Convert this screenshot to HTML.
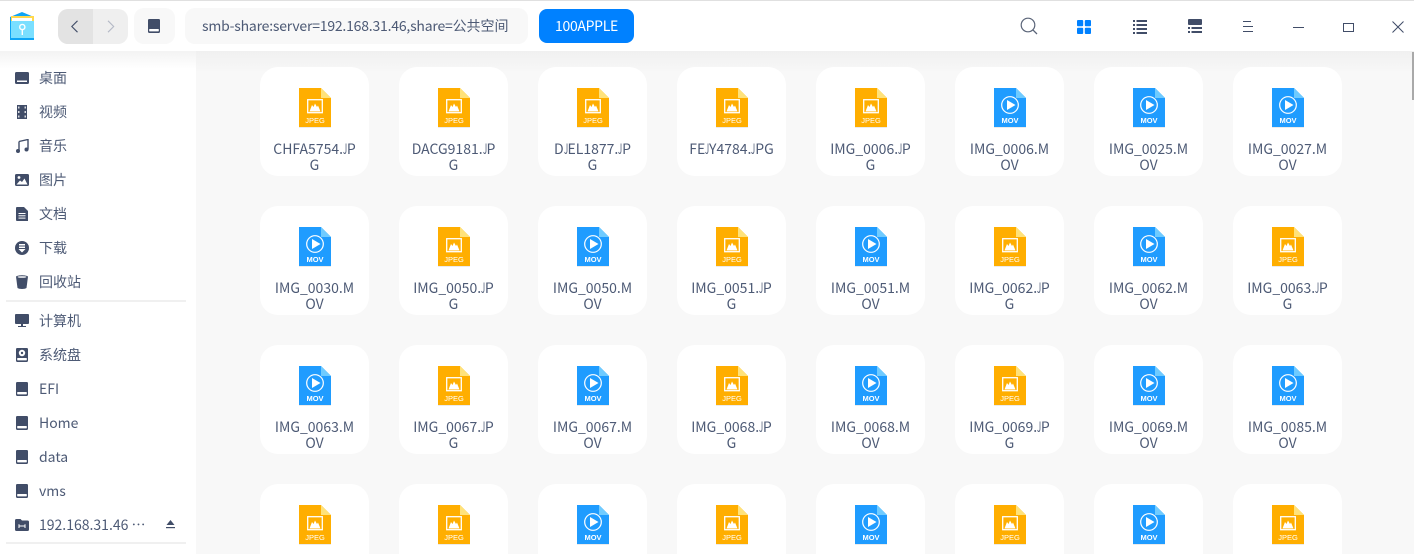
<!DOCTYPE html>
<html><head><meta charset="utf-8"><style>
html,body{margin:0;padding:0;width:1414px;height:554px;overflow:hidden;background:#f8f8f8;font-family:"Noto Sans CJK SC","Liberation Sans",sans-serif;color:#414d68}
#root{position:relative;width:1414px;height:554px;overflow:hidden;background:#f8f8f8}
#top{position:absolute;left:0;top:0;width:1414px;height:51px;background:#fff;border-top:1px solid #e0e0e0;box-sizing:border-box;z-index:3}
.a{position:absolute}
#shade{position:absolute;left:0;top:51px;width:1414px;height:22px;background:linear-gradient(#f0f0f0,#f8f8f8);}
#side{position:absolute;left:0;top:51px;width:196px;height:503px;background:linear-gradient(#f3f3f3,#fff 18px,#fff);font-size:14px}
.r{position:absolute;left:39px;line-height:20px;white-space:nowrap;color:#4d5a75}
.ic{position:absolute;left:15px;width:14px;height:14px;fill:#414d68}
.dv{position:absolute;left:6px;width:180px;height:2px;background:#f0f0f0}
#grid{position:absolute;left:260px;top:67px;display:grid;grid-template-columns:repeat(8,109px);column-gap:30px;row-gap:30px}
.c{position:relative;width:109px;height:109px;background:#fff;border-radius:18px;text-align:center;font-size:14px;line-height:16px;color:#4d5a75}
.c.l{height:70px;border-radius:18px 18px 0 0}
.c svg{position:absolute;left:39px;top:21px;width:32px;height:40px;overflow:visible}
.c p{position:absolute;left:0;top:74px;width:109px;margin:0}
.c b{font-weight:400;display:inline-block;width:3.8px;transform:scaleX(.55);transform-origin:0 50%}
.c text{font-family:"Liberation Sans",sans-serif;fill:#fff;text-anchor:middle}
</style></head><body>
<div id="root">
<svg width="0" height="0" style="position:absolute"><defs>
<symbol id="j" viewBox="0 0 32 40" overflow="visible"><rect y="39" width="32" height="1" fill="#000" opacity=".08"/><path d="M0 0H22L32 10V39H0Z" fill="#ffae00"/><path d="M22 0L32 10H22Z" fill="#ffe27a"/><rect x="8.7" y="11.7" width="14.6" height="13" fill="none" stroke="#fff" stroke-width="1.3"/><path d="M10.5 23.5L13 17L14.5 19L16 15.5L18 19L19 17.5L21.5 23.5Z" fill="#fff"/></symbol>
<symbol id="m" viewBox="0 0 32 40" overflow="visible"><rect y="39" width="32" height="1" fill="#000" opacity=".08"/><path d="M0 0H22L32 10V39H0Z" fill="#1f9cff"/><path d="M22 0L32 10H22Z" fill="#6fcbff"/><circle cx="16" cy="17" r="8.3" fill="none" stroke="#fff" stroke-width="1.2"/><path d="M13 12V22L21.5 17Z" fill="#fff"/></symbol>
<symbol id="d" viewBox="0 0 14 14"><path d="M2.2 0H11.8A1.2 1.2 0 0 1 13 1.2V12.8A1.2 1.2 0 0 1 11.8 14H2.2A1.2 1.2 0 0 1 1 12.8V1.2A1.2 1.2 0 0 1 2.2 0Z" fill="#414d68"/><rect x="2.2" y="10" width="9.6" height="2.4" rx=".6" fill="#fff"/></symbol>
</defs></svg>

<div id="shade"></div>
<div id="top"></div>

<div class="a" style="z-index:4;left:0;top:0;width:1414px;height:51px">
<svg class="a" style="left:10px;top:12px" width="25" height="28" viewBox="0 0 25 28"><path d="M0 5L12 0L24 5V28H0Z" fill="#0ea5f5"/><rect x="1" y="4" width="23" height="5" fill="#ffd84d"/><rect x="2" y="6" width="20" height="3" fill="#fff"/><rect x="1" y="9" width="23" height="17" fill="#7adfff"/><circle cx="12.3" cy="15" r="2.6" fill="none" stroke="#fff" stroke-width="1.4"/><path d="M12.3 17V23" stroke="#fff" stroke-width="1.4"/></svg>

<div class="a" style="left:58px;top:9px;width:70px;height:35px;border-radius:10px;overflow:hidden;background:#efefef"><div style="width:35px;height:35px;background:#e3e3e3"></div></div>
<svg class="a" style="left:70px;top:20px" width="10" height="13" viewBox="0 0 10 13"><path d="M7.5 .8L1.8 6.5L7.5 12.2" fill="none" stroke="#414d68" stroke-width="1.1"/></svg>
<svg class="a" style="left:106px;top:20px" width="10" height="13" viewBox="0 0 10 13"><path d="M2 .8L7.7 6.5L2 12.2" fill="none" stroke="#b4b9c6" stroke-width="1.1"/></svg>
<div class="a" style="left:134px;top:8px;width:41px;height:36px;border-radius:10px;background:#f8f8f8"></div>
<svg class="a" style="left:147px;top:19px" width="14" height="14"><use href="#d"/></svg>

<div class="a" style="left:185px;top:8px;width:343px;height:36px;border-radius:10px;background:#f8f8f8"></div>
<div class="a" style="left:202px;top:16px;font-size:14px;line-height:20px;white-space:nowrap;color:#4d5a75;letter-spacing:-.21px">smb-share:server=192.168.31.46,share=<span style="letter-spacing:0">公共空间</span></div>
<div class="a" style="left:539px;top:9px;width:95px;height:34px;border-radius:8px;background:#0081ff;color:#fff;font-size:14px;line-height:34px;text-align:center;letter-spacing:-.3px">100APPLE</div>

<svg class="a" style="left:1020px;top:17px" width="18" height="18" viewBox="0 0 18 18"><circle cx="8" cy="8" r="6.8" fill="none" stroke="#5a6478" stroke-width="1.2"/><path d="M12.8 12.8L17 17" stroke="#5a6478" stroke-width="1.3"/></svg>
<svg class="a" style="left:1077px;top:20px" width="14" height="14" fill="#0081ff"><rect width="6.2" height="6.2" rx="1"/><rect x="7.8" width="6.2" height="6.2" rx="1"/><rect y="7.8" width="6.2" height="6.2" rx="1"/><rect x="7.8" y="7.8" width="6.2" height="6.2" rx="1"/></svg>
<svg class="a" style="left:1133px;top:20px" width="14" height="14" fill="#414d68"><rect width="2" height="2"/><rect x="3.5" width="10.5" height="2"/><rect y="4" width="2" height="2"/><rect x="3.5" y="4" width="10.5" height="2"/><rect y="8" width="2" height="2"/><rect x="3.5" y="8" width="10.5" height="2"/><rect y="12" width="2" height="2"/><rect x="3.5" y="12" width="10.5" height="2"/></svg>
<svg class="a" style="left:1188px;top:19px" width="14" height="15" fill="#414d68"><rect width="14" height="6" rx="1"/><rect y="8" width="2" height="2"/><rect x="3.5" y="8" width="10.5" height="2"/><rect y="12" width="2" height="2"/><rect x="3.5" y="12" width="10.5" height="2"/></svg>
<svg class="a" style="left:1243px;top:21px" width="10" height="12" fill="#414d68"><rect width="8" height="1"/><rect y="5" width="10" height="1"/><rect y="10" width="10" height="1"/></svg>
<div class="a" style="left:1293px;top:27px;width:11px;height:1px;background:#414d68"></div>
<div class="a" style="left:1343px;top:23px;width:9px;height:7px;border:1px solid #414d68"></div>
<svg class="a" style="left:1392px;top:21px" width="12" height="12"><path d="M.5 .5L11.5 11.5M11.5 .5L.5 11.5" stroke="#414d68" stroke-width="1" fill="none"/></svg>
</div>

<div id="grid">
<div class="c"><svg><use href="#j"/><text x="16" y="35" font-size="7.5">JPEG</text></svg><p>CHFA5754.<b>J</b>P<br>G</p></div>
<div class="c"><svg><use href="#j"/><text x="16" y="35" font-size="7.5">JPEG</text></svg><p>DACG9181.<b>J</b>P<br>G</p></div>
<div class="c"><svg><use href="#j"/><text x="16" y="35" font-size="7.5">JPEG</text></svg><p>D<b>J</b>EL1877.<b>J</b>P<br>G</p></div>
<div class="c"><svg><use href="#j"/><text x="16" y="35" font-size="7.5">JPEG</text></svg><p>FE<b>J</b>Y4784.<b>J</b>PG</p></div>
<div class="c"><svg><use href="#j"/><text x="16" y="35" font-size="7.5">JPEG</text></svg><p>IMG_0006.<b>J</b>P<br>G</p></div>
<div class="c"><svg><use href="#m"/><text x="16" y="35" font-size="7.5" font-weight="700">MOV</text></svg><p>IMG_0006.M<br>OV</p></div>
<div class="c"><svg><use href="#m"/><text x="16" y="35" font-size="7.5" font-weight="700">MOV</text></svg><p>IMG_0025.M<br>OV</p></div>
<div class="c"><svg><use href="#m"/><text x="16" y="35" font-size="7.5" font-weight="700">MOV</text></svg><p>IMG_0027.M<br>OV</p></div>

<div class="c"><svg><use href="#m"/><text x="16" y="35" font-size="7.5" font-weight="700">MOV</text></svg><p>IMG_0030.M<br>OV</p></div>
<div class="c"><svg><use href="#j"/><text x="16" y="35" font-size="7.5">JPEG</text></svg><p>IMG_0050.<b>J</b>P<br>G</p></div>
<div class="c"><svg><use href="#m"/><text x="16" y="35" font-size="7.5" font-weight="700">MOV</text></svg><p>IMG_0050.M<br>OV</p></div>
<div class="c"><svg><use href="#j"/><text x="16" y="35" font-size="7.5">JPEG</text></svg><p>IMG_0051.<b>J</b>P<br>G</p></div>
<div class="c"><svg><use href="#m"/><text x="16" y="35" font-size="7.5" font-weight="700">MOV</text></svg><p>IMG_0051.M<br>OV</p></div>
<div class="c"><svg><use href="#j"/><text x="16" y="35" font-size="7.5">JPEG</text></svg><p>IMG_0062.<b>J</b>P<br>G</p></div>
<div class="c"><svg><use href="#m"/><text x="16" y="35" font-size="7.5" font-weight="700">MOV</text></svg><p>IMG_0062.M<br>OV</p></div>
<div class="c"><svg><use href="#j"/><text x="16" y="35" font-size="7.5">JPEG</text></svg><p>IMG_0063.<b>J</b>P<br>G</p></div>

<div class="c"><svg><use href="#m"/><text x="16" y="35" font-size="7.5" font-weight="700">MOV</text></svg><p>IMG_0063.M<br>OV</p></div>
<div class="c"><svg><use href="#j"/><text x="16" y="35" font-size="7.5">JPEG</text></svg><p>IMG_0067.<b>J</b>P<br>G</p></div>
<div class="c"><svg><use href="#m"/><text x="16" y="35" font-size="7.5" font-weight="700">MOV</text></svg><p>IMG_0067.M<br>OV</p></div>
<div class="c"><svg><use href="#j"/><text x="16" y="35" font-size="7.5">JPEG</text></svg><p>IMG_0068.<b>J</b>P<br>G</p></div>
<div class="c"><svg><use href="#m"/><text x="16" y="35" font-size="7.5" font-weight="700">MOV</text></svg><p>IMG_0068.M<br>OV</p></div>
<div class="c"><svg><use href="#j"/><text x="16" y="35" font-size="7.5">JPEG</text></svg><p>IMG_0069.<b>J</b>P<br>G</p></div>
<div class="c"><svg><use href="#m"/><text x="16" y="35" font-size="7.5" font-weight="700">MOV</text></svg><p>IMG_0069.M<br>OV</p></div>
<div class="c"><svg><use href="#m"/><text x="16" y="35" font-size="7.5" font-weight="700">MOV</text></svg><p>IMG_0085.M<br>OV</p></div>

<div class="c l"><svg><use href="#j"/><text x="16" y="35" font-size="7.5">JPEG</text></svg></div>
<div class="c l"><svg><use href="#j"/><text x="16" y="35" font-size="7.5">JPEG</text></svg></div>
<div class="c l"><svg><use href="#m"/><text x="16" y="35" font-size="7.5" font-weight="700">MOV</text></svg></div>
<div class="c l"><svg><use href="#j"/><text x="16" y="35" font-size="7.5">JPEG</text></svg></div>
<div class="c l"><svg><use href="#m"/><text x="16" y="35" font-size="7.5" font-weight="700">MOV</text></svg></div>
<div class="c l"><svg><use href="#j"/><text x="16" y="35" font-size="7.5">JPEG</text></svg></div>
<div class="c l"><svg><use href="#m"/><text x="16" y="35" font-size="7.5" font-weight="700">MOV</text></svg></div>
<div class="c l"><svg><use href="#j"/><text x="16" y="35" font-size="7.5">JPEG</text></svg></div>
</div>

<div class="a" style="left:1412px;top:52px;width:2px;height:48px;background:#a9a9a9"></div>

<div id="side">
<svg class="ic" style="top:20px" viewBox="0 0 14 14"><path d="M1.5 1H12.5A1.5 1.5 0 0 1 14 2.5V11.5A1.5 1.5 0 0 1 12.5 13H1.5A1.5 1.5 0 0 1 0 11.5V2.5A1.5 1.5 0 0 1 1.5 1Z"/><rect x="2" y="9.5" width="10" height="1.5" fill="#fff"/></svg><div class="r" style="top:17px">桌面</div>
<svg class="ic" style="top:54px" viewBox="0 0 14 14"><path d="M2 0H12V14H2Z"/><g fill="#fff"><rect x="3.2" y="1.5" width="1.2" height="2"/><rect x="3.2" y="6" width="1.2" height="2"/><rect x="3.2" y="10.5" width="1.2" height="2"/><rect x="9.6" y="1.5" width="1.2" height="2"/><rect x="9.6" y="6" width="1.2" height="2"/><rect x="9.6" y="10.5" width="1.2" height="2"/></g></svg><div class="r" style="top:51px">视频</div>
<svg class="ic" style="top:88px" viewBox="0 0 14 14"><path d="M4 2.5L13 .5V10.5" fill="none" stroke="#414d68" stroke-width="1.4"/><path d="M4 2.5V12" fill="none" stroke="#414d68" stroke-width="1.4"/><circle cx="3" cy="12" r="2"/><circle cx="11.5" cy="10.5" r="2"/></svg><div class="r" style="top:85px">音乐</div>
<svg class="ic" style="top:122px" viewBox="0 0 14 14"><rect y="1" width="14" height="12" rx="1.5"/><circle cx="4" cy="4.5" r="1.4" fill="#fff"/><path d="M1.5 11.5L5 7.5L7 9L9.5 5.5L12.5 11.5Z" fill="#fff"/></svg><div class="r" style="top:119px">图片</div>
<svg class="ic" style="top:156px" viewBox="0 0 14 14"><path d="M2 0H9L13 4V14H2A1 1 0 0 1 1 13V1A1 1 0 0 1 2 0Z"/><g fill="#fff"><rect x="3.5" y="6" width="7" height="1"/><rect x="3.5" y="8.3" width="7" height="1"/><rect x="3.5" y="10.6" width="7" height="1"/></g></svg><div class="r" style="top:153px">文档</div>
<svg class="ic" style="top:190px" viewBox="0 0 14 14"><circle cx="7" cy="7" r="7"/><path d="M4 3H10V4.5H4ZM4 5.5H10V7H4ZM3.5 8H10.5L7 11.5Z" fill="#fff"/></svg><div class="r" style="top:187px">下载</div>
<svg class="ic" style="top:224px" viewBox="0 0 14 14"><path d="M1 1.5C3 -.2 11 -.2 13 1.5L11.5 13C10 14.3 4 14.3 2.5 13Z"/><ellipse cx="7" cy="2" rx="4.5" ry=".8" fill="#fff"/></svg><div class="r" style="top:221px">回收站</div>
<div class="dv" style="top:249px"></div>
<svg class="ic" style="top:263px" viewBox="0 0 14 14"><rect y="0" width="14" height="10" rx="1"/><rect x="6" y="10" width="2" height="2"/><rect x="3" y="12" width="8" height="1"/></svg><div class="r" style="top:260px">计算机</div>
<svg class="ic" style="top:297px" viewBox="0 0 14 14"><use href="#d"/><circle cx="7" cy="5" r="3.2" fill="#fff"/><circle cx="7" cy="5" r="1.2"/></svg><div class="r" style="top:294px">系统盘</div>
<svg class="ic" style="top:331px" viewBox="0 0 14 14"><use href="#d"/></svg><div class="r" style="top:328px">EFI</div>
<svg class="ic" style="top:365px" viewBox="0 0 14 14"><use href="#d"/></svg><div class="r" style="top:362px">Home</div>
<svg class="ic" style="top:399px" viewBox="0 0 14 14"><use href="#d"/></svg><div class="r" style="top:396px">data</div>
<svg class="ic" style="top:433px" viewBox="0 0 14 14"><use href="#d"/></svg><div class="r" style="top:430px">vms</div>
<svg class="ic" style="top:467px" viewBox="0 0 14 14"><path d="M1.5 1H5.5L7 2.5H12.5A1.5 1.5 0 0 1 14 4V11.5A1.5 1.5 0 0 1 12.5 13H1.5A1.5 1.5 0 0 1 0 11.5V2.5A1.5 1.5 0 0 1 1.5 1Z"/><path d="M4 6.2V10M10 6.2V10M4 8H10" stroke="#fff" stroke-width="1" fill="none"/></svg><div class="r" style="top:464px">192.168.31.46 ⋯</div>
<svg class="a" style="left:166px;top:469px" width="9" height="10" fill="#414d68"><path d="M4.5 0L8.5 5H.5Z"/><rect y="7" width="9" height="1.2"/></svg>
<div class="dv" style="top:491px"></div>
</div>
</div>
</body></html>
